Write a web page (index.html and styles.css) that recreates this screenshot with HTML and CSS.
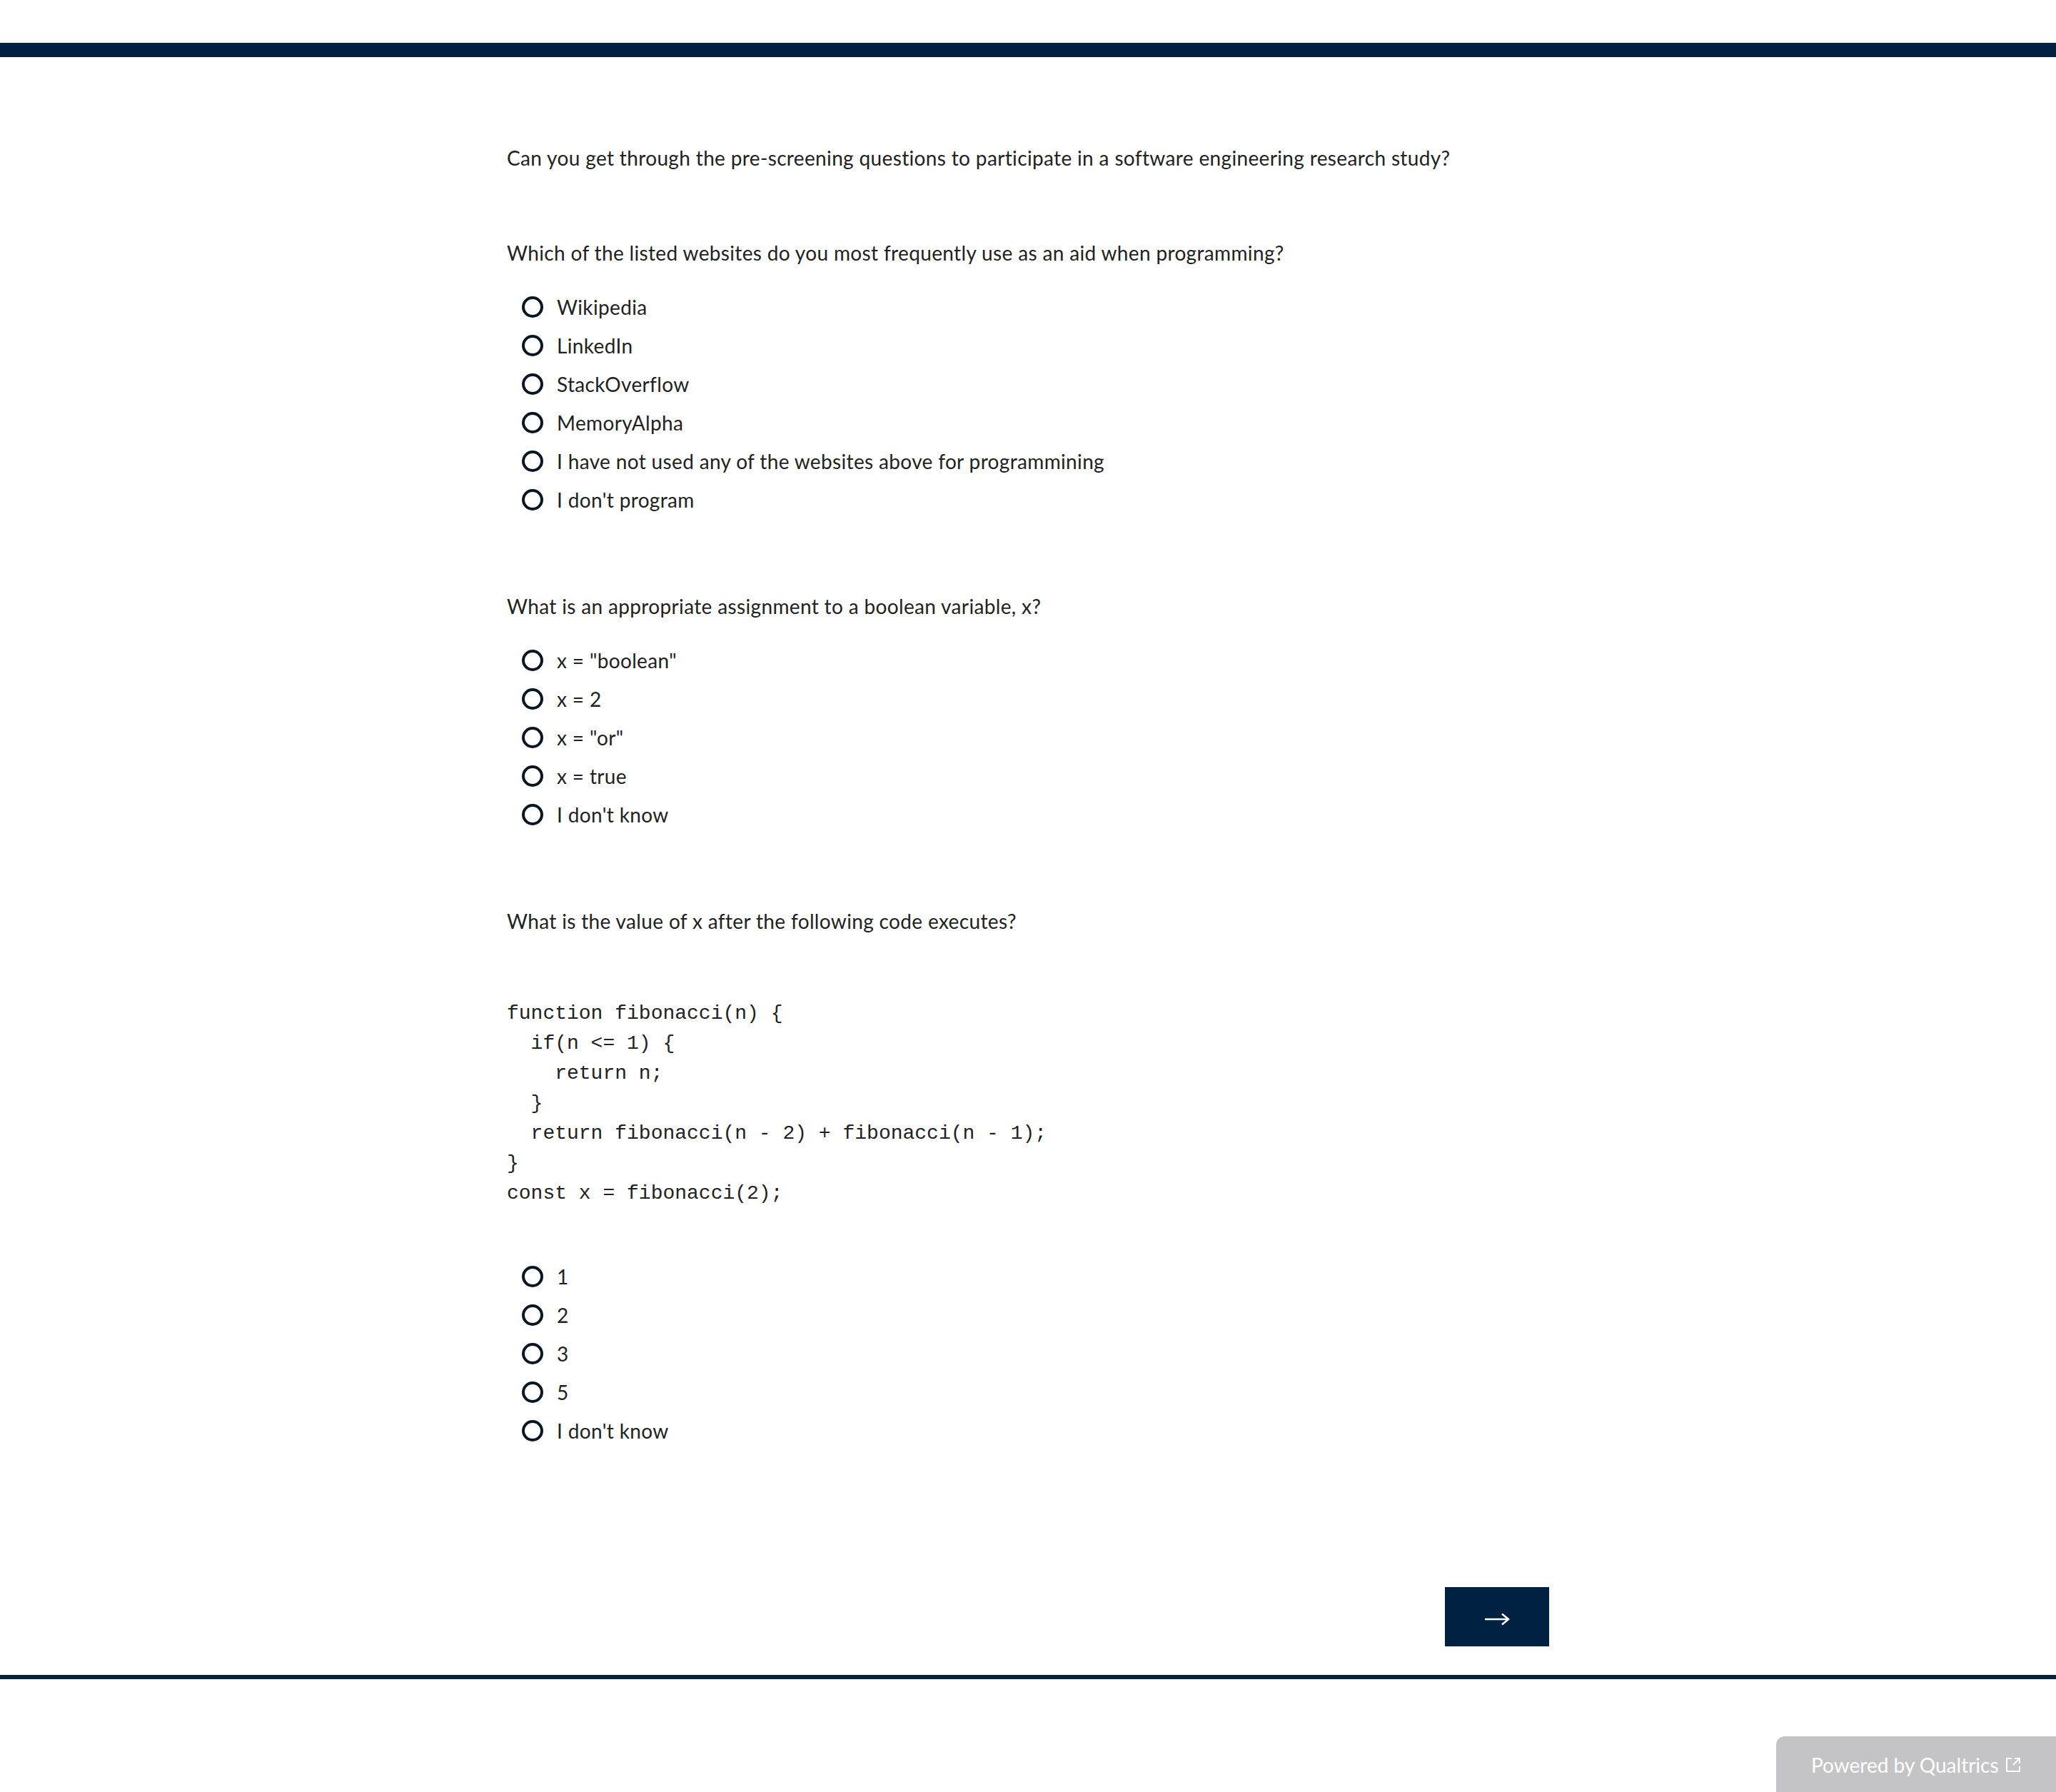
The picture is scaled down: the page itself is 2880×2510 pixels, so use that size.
FILE: index.html
```html
<!DOCTYPE html>
<html lang="en">
<head>
<meta charset="utf-8">
<title>Survey</title>
<link rel="stylesheet" href="styles.css">
</head>
<body>
<header class="top"><div class="top-bar"></div></header>
<main class="survey">
  <p class="intro">Can you get through the pre-screening questions to participate in a software engineering research study?</p>

  <section class="question q1">
    <p class="q-text">Which of the listed websites do you most frequently use as an aid when programming?</p>
    <ul class="choices">
      <li class="choice"><span class="radio"></span><span class="label">Wikipedia</span></li>
      <li class="choice"><span class="radio"></span><span class="label">LinkedIn</span></li>
      <li class="choice"><span class="radio"></span><span class="label">StackOverflow</span></li>
      <li class="choice"><span class="radio"></span><span class="label">MemoryAlpha</span></li>
      <li class="choice"><span class="radio"></span><span class="label">I have not used any of the websites above for programmining</span></li>
      <li class="choice"><span class="radio"></span><span class="label">I don't program</span></li>
    </ul>
  </section>

  <section class="question">
    <p class="q-text">What is an appropriate assignment to a boolean variable, x?</p>
    <ul class="choices">
      <li class="choice"><span class="radio"></span><span class="label">x = "boolean"</span></li>
      <li class="choice"><span class="radio"></span><span class="label">x = 2</span></li>
      <li class="choice"><span class="radio"></span><span class="label">x = "or"</span></li>
      <li class="choice"><span class="radio"></span><span class="label">x = true</span></li>
      <li class="choice"><span class="radio"></span><span class="label">I don't know</span></li>
    </ul>
  </section>

  <section class="question">
    <p class="q-text">What is the value of x after the following code executes?</p>
<pre class="code">function fibonacci(n) {
  if(n &lt;= 1) {
    return n;
  }
  return fibonacci(n - 2) + fibonacci(n - 1);
}
const x = fibonacci(2);</pre>
    <ul class="choices after-code">
      <li class="choice"><span class="radio"></span><span class="label">1</span></li>
      <li class="choice"><span class="radio"></span><span class="label">2</span></li>
      <li class="choice"><span class="radio"></span><span class="label">3</span></li>
      <li class="choice"><span class="radio"></span><span class="label">5</span></li>
      <li class="choice"><span class="radio"></span><span class="label">I don't know</span></li>
    </ul>
  </section>

  <div class="nav">
    <button class="next" type="button" aria-label="Next">
      <svg class="arrow" width="36" height="20" viewBox="0 0 36 20"><path d="M1 10H34" fill="none" stroke="#fff" stroke-width="2.6"/><path d="M25 2.5L34 10L25 17.5" fill="none" stroke="#fff" stroke-width="2.6" stroke-linejoin="miter"/></svg>
    </button>
  </div>
</main>
<div class="rule"></div>
<footer class="foot">
  <a class="powered" href="#">Powered by Qualtrics<svg class="ext" width="22" height="22" viewBox="0 0 22 22"><path d="M9 2H2V20H20V13" fill="none" stroke="#fff" stroke-width="2"/><path d="M13 2H20V9M20 2L11 11" fill="none" stroke="#fff" stroke-width="2"/></svg></a>
</footer>
</body>
</html>
```

FILE: styles.css
```css
html, body {
  margin: 0;
  padding: 0;
  background: #fff;
}
body {
  font-family: Lato, "Open Sans", sans-serif;
  font-size: 28px;
  line-height: 42px;
  color: #222;
}
.top {
  padding-top: 60px;
}
.top-bar {
  height: 20px;
  background: #012142;
}
.survey {
  width: 1460px;
  margin: 0 auto;
  display: flex;
  flex-direction: column;
  letter-spacing: 0.35px;
}
.intro {
  margin: 120px 0 0;
}
.question {
  margin-top: 101px;
}
.question.q1 {
  margin-top: 91px;
}
.q-text {
  margin: 0;
}
.choices {
  list-style: none;
  margin: 28px 0 0;
  padding: 0 0 0 21px;
}
.choices.after-code {
  margin-top: 68px;
}
.choice {
  height: 54px;
  display: flex;
  align-items: center;
  gap: 19px;
}
.radio {
  flex: none;
  width: 30px;
  height: 30px;
  box-sizing: border-box;
  border: 4px solid #0b1623;
  border-radius: 50%;
}
.code {
  margin: 88px 0 0;
  font-family: "Liberation Mono", monospace;
  font-size: 28px;
  line-height: 42px;
  letter-spacing: 0;
  white-space: pre;
  color: #222;
}
.nav {
  display: flex;
  justify-content: flex-end;
  margin-top: 192px;
}
.next {
  width: 146px;
  height: 83px;
  border: 0;
  background: #012142;
  padding: 7px 0 0;
  display: flex;
  align-items: center;
  justify-content: center;
  cursor: pointer;
}
.arrow {
  display: block;
}
.rule {
  height: 6px;
  background: #012142;
  margin-top: 40px;
}
.foot {
  display: flex;
  justify-content: flex-end;
  margin-top: 80px;
}
.powered {
  width: 392px;
  height: 79px;
  box-sizing: border-box;
  background: #c4c4c6;
  color: #fff;
  text-decoration: none;
  border-top-left-radius: 12px;
  padding-left: 49px;
  display: flex;
  align-items: center;
  gap: 9px;
}
.ext {
  display: block;
  flex: none;
}
```
